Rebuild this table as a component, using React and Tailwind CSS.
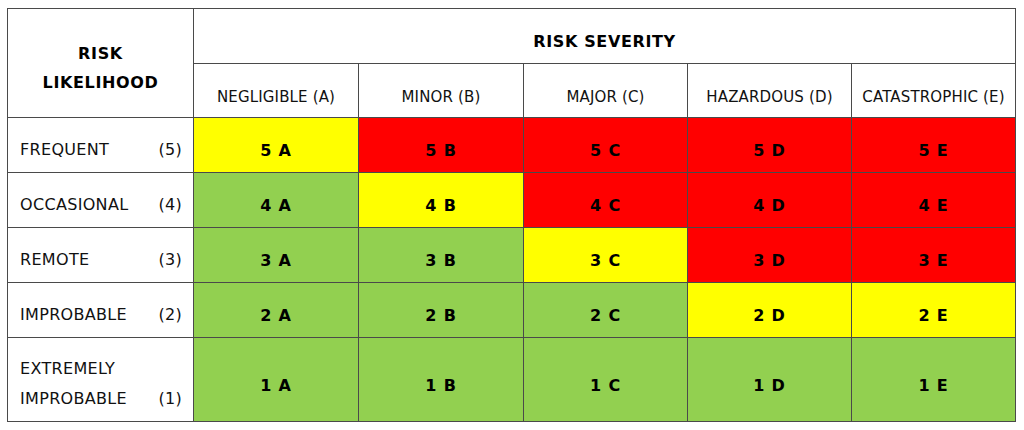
const FONT = { fontFamily: '"DejaVu Sans", Verdana, sans-serif' };

const severities = ["NEGLIGIBLE (A)", "MINOR (B)", "MAJOR (C)", "HAZARDOUS (D)", "CATASTROPHIC (E)"];
const letters = ["A", "B", "C", "D", "E"];

const Y = "bg-[#ffff00]";
const R = "bg-[#ff0000]";
const G = "bg-[#92d050]";

const rows = [
  { n: 5, label: "FREQUENT", colors: [Y, R, R, R, R] },
  { n: 4, label: "OCCASIONAL", colors: [G, Y, R, R, R] },
  { n: 3, label: "REMOTE", colors: [G, G, Y, R, R] },
  { n: 2, label: "IMPROBABLE", colors: [G, G, G, Y, Y] },
];

export default function App() {
  return (
    <div className="w-[1024px] h-[430px] bg-white pl-[7px] pt-[8px] text-black" style={FONT}>
      <div
        className="w-[1009px] grid gap-px bg-[#4a4a4a] p-px grid-cols-[185px_164px_164px_163px_163px_163px] grid-rows-[54px_53px_54px_54px_54px_54px_83px]"
      >
        {/* Corner */}
        <div className="row-span-2 bg-white flex flex-col items-center justify-center pt-[10px] font-bold text-[16px] leading-[29px] tracking-[0.04em]">
          <span>RISK</span>
          <span>LIKELIHOOD</span>
        </div>

        {/* Severity title */}
        <div className="col-span-5 bg-white flex items-center justify-center pt-[11px] font-bold text-[16px] tracking-[0.04em]">
          RISK SEVERITY
        </div>

        {severities.map((s) => (
          <div
            key={s}
            className="bg-white flex items-center justify-center pt-[14px] text-[15px] tracking-[0.01em] text-[#111]"
          >
            {s}
          </div>
        ))}

        {rows.map((r) => (
          <Row key={r.n} row={r} />
        ))}

        {/* Extremely improbable */}
        <div className="bg-white flex flex-col justify-center pt-[8px] pl-[12px] pr-[11px] text-[16px] leading-[30px] tracking-[0.02em] text-[#111]">
          <span>EXTREMELY</span>
          <div className="flex justify-between">
            <span>IMPROBABLE</span>
            <span>(1)</span>
          </div>
        </div>
        {letters.map((l) => (
          <div
            key={l}
            className={`${G} flex items-center justify-center pt-[13px] font-bold text-[16px] tracking-[0.05em]`}
          >
            1 {l}
          </div>
        ))}
      </div>
    </div>
  );
}

function Row({ row }) {
  return (
    <>
      <div className="bg-white flex items-center justify-between pt-[9px] pl-[12px] pr-[11px] text-[16px] tracking-[0.02em] text-[#111]">
        <span>{row.label}</span>
        <span>({row.n})</span>
      </div>
      {letters.map((l, i) => (
        <div
          key={l}
          className={`${row.colors[i]} flex items-center justify-center pt-[11px] font-bold text-[16px] tracking-[0.05em]`}
        >
          {row.n} {l}
        </div>
      ))}
    </>
  );
}
